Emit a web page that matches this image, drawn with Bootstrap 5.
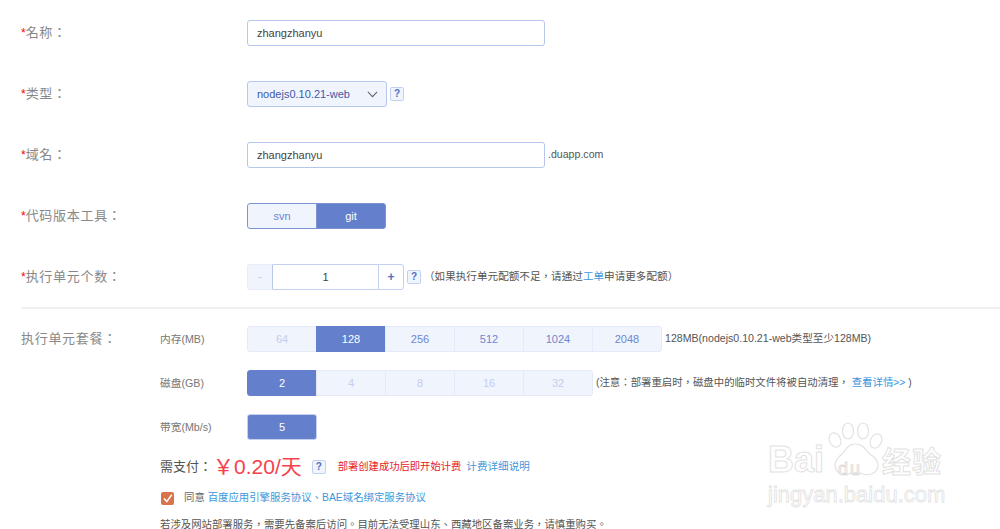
<!DOCTYPE html>
<html>
<head>
<meta charset="utf-8">
<title>创建应用</title>
<link rel="stylesheet" href="https://cdn.jsdelivr.net/npm/bootstrap@5.3.0/dist/css/bootstrap.min.css">
<style>
html,body{height:529px;overflow:hidden;background:#fff}
body{font-family:"Liberation Sans","Noto Sans CJK TC",sans-serif;font-size:11px;color:#555;position:relative}
.page-form{padding-top:20px}
.form-line{height:26px;margin-bottom:35px;padding-left:21px}
.form-line.last-line{margin-bottom:17px}
.line-label{width:226px;flex:none;font-size:13px;color:#888;letter-spacing:.7px}
.req{color:#f00;font-size:12px;letter-spacing:0}
.ctl-input.form-control{width:298px;height:26px;padding:0 9px;font-size:11px;color:#444;border:1px solid #b7c6ec;border-radius:3px}
.ctl-select.form-select{width:140px;height:26px;padding:0 9px;font-size:11px;color:#3f5aa5;background-color:#f0f4fd;border:1px solid #b7c6ec;border-radius:3px;background-image:url("data:image/svg+xml,%3csvg xmlns='http://www.w3.org/2000/svg' viewBox='0 0 13 8'%3e%3cpath fill='none' stroke='%23666' stroke-width='1.3' d='M1 1l5.5 5.5L12 1'/%3e%3c/svg%3e");background-size:11px 7px;background-position:right 8px center}
.help-tag{width:14px;height:14px;border:1px solid #c3d0f0;border-radius:2px;background:#f0f4fd;color:#4f6fc0;font-size:10px;font-weight:700;line-height:12px;text-align:center;flex:none}
.gap-s{margin-left:3px}
.seg-group{display:inline-flex;height:26px}
.seg-btn.btn{width:70px;height:26px;padding:0;font-size:11px;line-height:24px;border:1px solid #e4eafa;background:#f0f4fd;color:#6e87cf;border-radius:0;margin-left:-1px}
.seg-btn.btn:first-child{margin-left:0;border-radius:3px 0 0 3px}
.seg-btn.btn:last-child{border-radius:0 3px 3px 0}
.seg-btn.btn.seg-on{background:#6480cc;border-color:#6480cc;color:#fff}
.seg-btn.btn.seg-off{color:#c3cfee}
.seg-btn.btn.seg-solo{margin-left:0;border-radius:3px;border-color:#c3d0f0}
.tool-group .seg-btn.btn{border-color:#7c94d6}
.stepper{display:inline-flex;height:26px}
.step-btn{height:26px;line-height:24px;text-align:center;border:1px solid #c3d0f0;font-size:12px}
.step-minus{width:26px;background:#f0f4fd;border-color:#e8edfa;color:#c3cfee;border-radius:3px 0 0 3px;border-right-color:#b7c6ec}
.step-val{width:105px;border-left:0;border-right:0;color:#444;background:#fff;font-size:11px}
.step-plus{width:26px;color:#4f6fc0;border-radius:0 3px 3px 0;font-weight:700}
.hint{font-size:10.6px;color:#555;white-space:nowrap}
.hint-sm{font-size:10.4px}
.hint a,.link-blue{color:#3d97dc;text-decoration:none}
.rule-line{height:2px;background:#f0f0f0;margin:0 0 17px 21px}
.plan-wrap{padding-left:21px}
.plan-title{width:139px;flex:none;font-size:13px;color:#888;letter-spacing:.7px;height:26px;line-height:26px}
.plan-rows{flex:1;min-width:0}
.plan-row{height:26px;margin-bottom:18px}
.plan-key{width:87px;flex:none;font-size:10.7px;color:#777}
.price-row{height:30px;margin-top:-6px;margin-bottom:8px;white-space:nowrap}
.price-key{font-size:13px;color:#555}
.price-num{font-size:21px;color:#f5414a;line-height:30px;margin-left:1px}
.price-tag{margin-left:10px}
.price-note{font-size:10.3px;color:#e8202a;margin-left:12px}
.price-link{margin-left:5px}
.agree-row{height:16px;font-size:10.4px;color:#666;margin-bottom:13px}
.check-box{width:13px;height:13px;flex:none;margin-left:1px;margin-right:10px}
.warn-row{font-size:10.4px;color:#555;white-space:nowrap;line-height:12px}
.wm{position:absolute;left:765px;top:420px;width:220px;height:100px;pointer-events:none}
.wm-big{position:absolute;left:3px;top:20px;font-size:36px;font-weight:700;color:#fff;-webkit-text-stroke:1px #e2e2e2;line-height:40px}
.wm-cn{position:absolute;left:117px;top:26px;font-size:29px;font-weight:700;color:#fff;-webkit-text-stroke:1px #e2e2e2;line-height:34px;letter-spacing:1px;white-space:nowrap}
.wm-du{position:absolute;left:73px;top:38px;font-size:18px;color:#fff;-webkit-text-stroke:.8px #d8d8d8;line-height:22px;letter-spacing:2px}
.wm-url{position:absolute;left:3px;top:62px;font-size:22px;color:#fff;-webkit-text-stroke:.8px #e2e2e2;line-height:26px;white-space:nowrap}
.wm-paw{position:absolute;left:63px;top:1px}
</style>
</head>
<body>
<form class="page-form" onsubmit="return false">
  <div class="form-line d-flex align-items-center">
    <div class="line-label"><span class="req">*</span>名称：</div>
    <input class="form-control ctl-input" type="text" value="zhangzhanyu">
  </div>
  <div class="form-line d-flex align-items-center">
    <div class="line-label"><span class="req">*</span>类型：</div>
    <select class="form-select ctl-select"><option>nodejs0.10.21-web</option></select>
    <span class="help-tag gap-s">?</span>
  </div>
  <div class="form-line d-flex align-items-center">
    <div class="line-label"><span class="req">*</span>域名：</div>
    <input class="form-control ctl-input" type="text" value="zhangzhanyu">
    <span class="hint gap-s">.duapp.com</span>
  </div>
  <div class="form-line d-flex align-items-center">
    <div class="line-label"><span class="req">*</span>代码版本工具：</div>
    <div class="seg-group tool-group">
      <button type="button" class="btn seg-btn">svn</button>
      <button type="button" class="btn seg-btn seg-on">git</button>
    </div>
  </div>
  <div class="form-line last-line d-flex align-items-center">
    <div class="line-label"><span class="req">*</span>执行单元个数：</div>
    <div class="stepper">
      <div class="step-btn step-minus">-</div>
      <div class="step-btn step-val">1</div>
      <div class="step-btn step-plus">+</div>
    </div>
    <span class="help-tag gap-s">?</span>
    <span class="hint gap-s">（如果执行单元配额不足，请通过<a href="#">工单</a>申请更多配额）</span>
  </div>
  <div class="rule-line"></div>
  <div class="plan-wrap d-flex">
    <div class="plan-title">执行单元套餐：</div>
    <div class="plan-rows">
      <div class="plan-row d-flex align-items-center">
        <div class="plan-key">内存(MB)</div>
        <div class="seg-group">
          <button type="button" class="btn seg-btn seg-off">64</button>
          <button type="button" class="btn seg-btn seg-on">128</button>
          <button type="button" class="btn seg-btn">256</button>
          <button type="button" class="btn seg-btn">512</button>
          <button type="button" class="btn seg-btn">1024</button>
          <button type="button" class="btn seg-btn">2048</button>
        </div>
        <span class="hint gap-s">128MB(nodejs0.10.21-web类型至少128MB)</span>
      </div>
      <div class="plan-row d-flex align-items-center">
        <div class="plan-key">磁盘(GB)</div>
        <div class="seg-group">
          <button type="button" class="btn seg-btn seg-on">2</button>
          <button type="button" class="btn seg-btn seg-off">4</button>
          <button type="button" class="btn seg-btn seg-off">8</button>
          <button type="button" class="btn seg-btn seg-off">16</button>
          <button type="button" class="btn seg-btn seg-off">32</button>
        </div>
        <span class="hint hint-sm gap-s">(注意：部署重启时，磁盘中的临时文件将被自动清理， <a href="#">查看详情&gt;&gt;</a> )</span>
      </div>
      <div class="plan-row d-flex align-items-center">
        <div class="plan-key">带宽(Mb/s)</div>
        <button type="button" class="btn seg-btn seg-on seg-solo">5</button>
      </div>
      <div class="price-row d-flex align-items-center">
        <span class="price-key">需支付：</span>
        <span class="price-num">￥0.20/天</span>
        <span class="help-tag price-tag">?</span>
        <span class="price-note">部署创建成功后即开始计费</span>
        <a class="hint link-blue price-link" href="#">计费详细说明</a>
      </div>
      <div class="agree-row d-flex align-items-center">
        <svg class="check-box" viewBox="0 0 13 13" aria-hidden="true"><rect width="13" height="13" rx="2" fill="#d9744a"/><path d="M3 6.5 5.8 9.6 10.8 2.6" fill="none" stroke="#fff" stroke-width="1.6"/></svg>
        <span>同意 <a class="link-blue" href="#">百度应用引擎服务协议、BAE域名绑定服务协议</a></span>
      </div>
      <div class="warn-row">若涉及网站部署服务，需要先备案后访问。目前无法受理山东、西藏地区备案业务，请慎重购买。</div>
    </div>
  </div>
</form>
<div class="wm">
  <svg class="wm-paw" width="56" height="60" viewBox="0 0 56 58" aria-hidden="true">
    <g fill="#fff" stroke="#e2e2e2" stroke-width="1.2">
      <ellipse cx="7" cy="18" rx="5.5" ry="7.5" transform="rotate(-25 7 18)"/>
      <ellipse cx="20" cy="9" rx="5.5" ry="8"/>
      <ellipse cx="35" cy="9" rx="5.5" ry="8"/>
      <ellipse cx="48" cy="19" rx="5.5" ry="7.5" transform="rotate(25 48 19)"/>
      <path d="M27 22c-7 0-9 6-13 10-5 4-7 7-7 11 0 7 6 10 12 9 5-1 11-2 16 0 7 2 15-1 15-9 0-5-4-8-8-11-4-4-7-10-15-10z"/>
    </g>
  </svg>
  <span class="wm-big">Bai</span>
  <span class="wm-du">du</span>
  <span class="wm-cn">经验</span>
  <span class="wm-url">jingyan.baidu.com</span>
</div>
<script src="https://cdn.jsdelivr.net/npm/bootstrap@5.3.0/dist/js/bootstrap.bundle.min.js"></script>
</body>
</html>
